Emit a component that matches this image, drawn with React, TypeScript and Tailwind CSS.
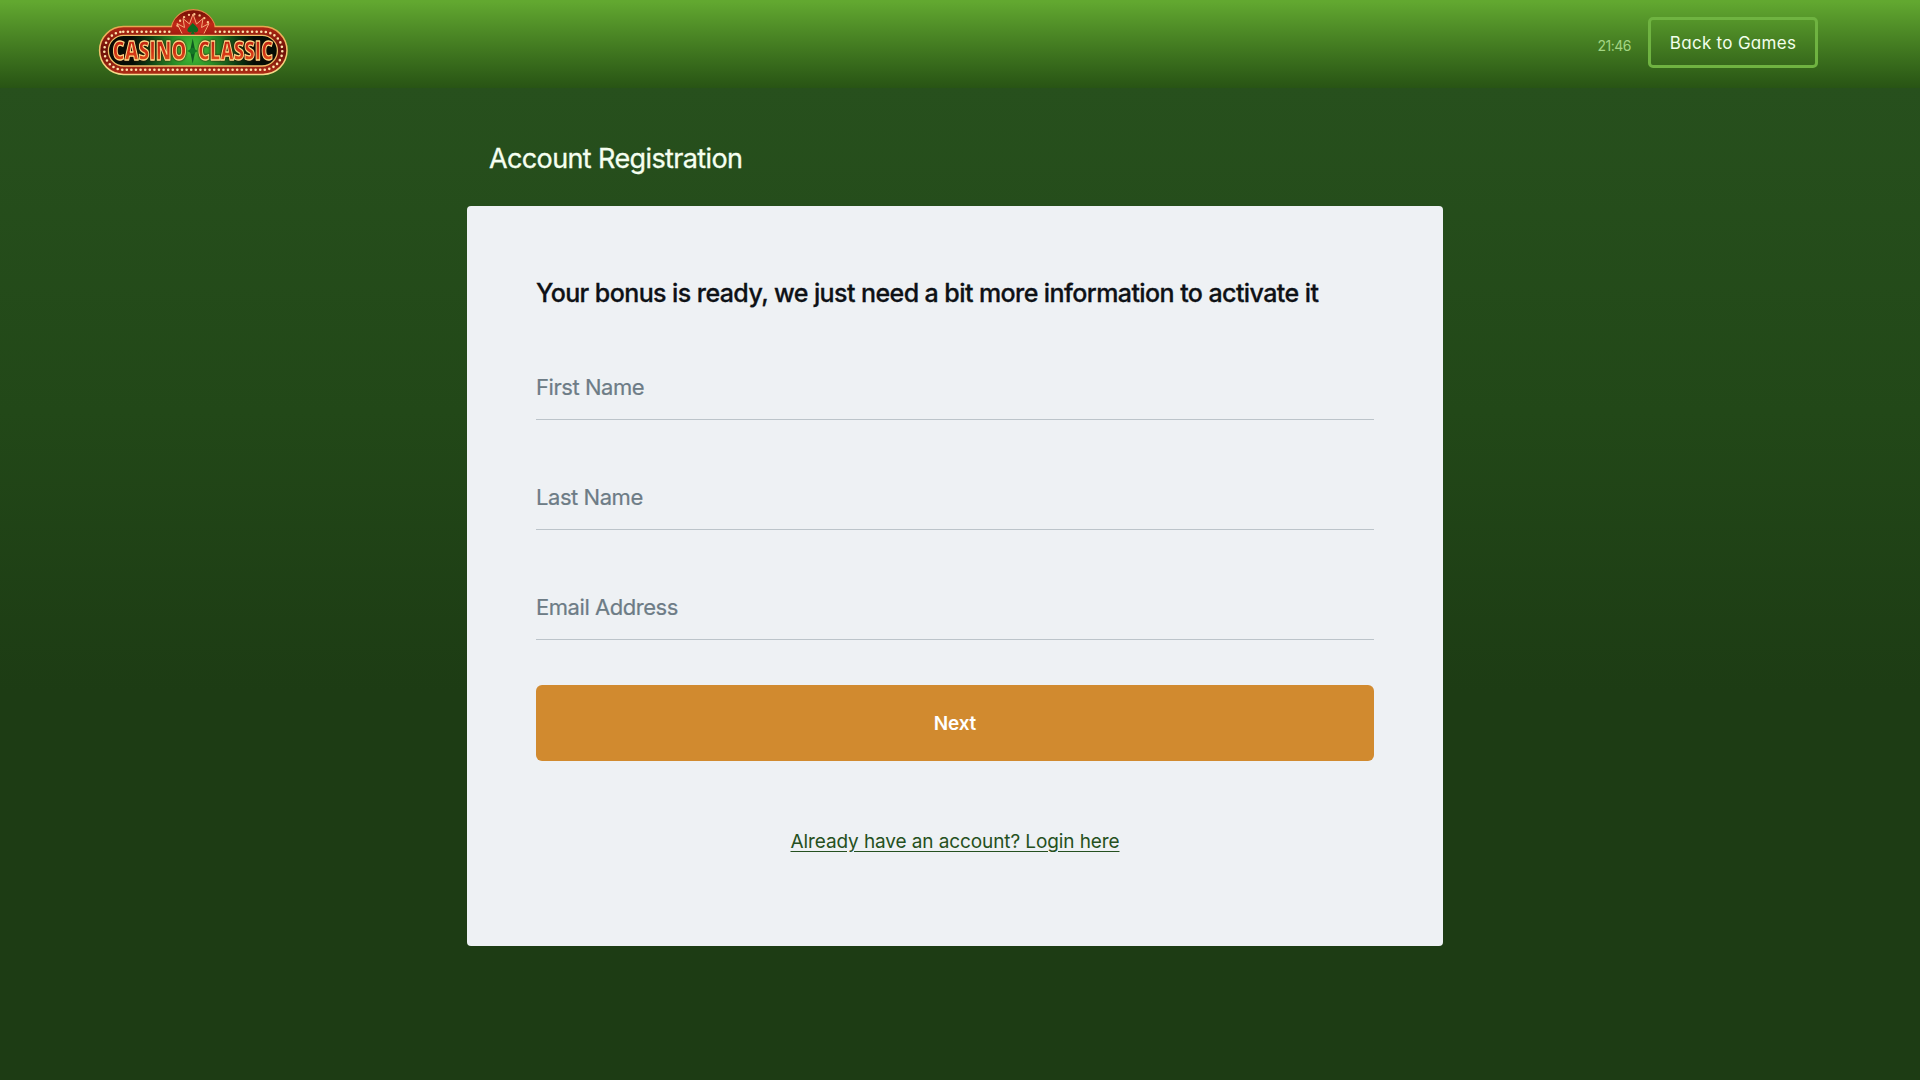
import React from "react";

const fields = ["First Name", "Last Name", "Email Address"];

function Logo() {
  return (
    <svg className="mt-2 h-[68px] w-[190px] shrink-0 overflow-visible" viewBox="98 8 190 68" role="img" aria-label="Casino Classic">
      <defs>
        <linearGradient id="band" x1="0" y1="0" x2="0" y2="1">
          <stop offset="0" stopColor="#b02814" />
          <stop offset="0.5" stopColor="#6a1008" />
          <stop offset="1" stopColor="#b02c16" />
        </linearGradient>
        <linearGradient id="dome" x1="0" y1="0" x2="0" y2="1">
          <stop offset="0" stopColor="#7c1207" />
          <stop offset="0.5" stopColor="#c22817" />
          <stop offset="1" stopColor="#a01a10" />
        </linearGradient>
        <radialGradient id="felt" gradientUnits="userSpaceOnUse" cx="193" cy="50" r="62">
          <stop offset="0" stopColor="#4cc43c" />
          <stop offset="0.3" stopColor="#2f9a2a" />
          <stop offset="0.75" stopColor="#0c3a12" />
          <stop offset="1" stopColor="#050d06" />
        </radialGradient>
        <linearGradient id="gold" x1="0" y1="0" x2="0" y2="1">
          <stop offset="0" stopColor="#e8a850" />
          <stop offset="0.5" stopColor="#f2c26a" />
          <stop offset="1" stopColor="#f7dc8c" />
        </linearGradient>
        <linearGradient id="letters" x1="0" y1="0" x2="0" y2="1">
          <stop offset="0" stopColor="#b81c10" />
          <stop offset="0.55" stopColor="#cf3014" />
          <stop offset="1" stopColor="#ee6a22" />
        </linearGradient>
      </defs>
      <circle cx="193.3" cy="32.2" r="22.6" fill="url(#dome)" stroke="#e08a48" strokeWidth="1.3" />
      <rect x="99.6" y="26.6" width="187.4" height="47.8" rx="23.9" fill="url(#band)" stroke="url(#gold)" strokeWidth="1.5" />
      <rect x="104.3" y="31.8" width="178" height="38" rx="19" fill="none" stroke="#ffe3ac" strokeWidth="2.6" strokeLinecap="round" strokeDasharray="0 4.6" />
      <path d="M172 35 V27 Q174 17 183 13 h21 Q213 18 214.5 27 V35z" fill="url(#dome)" />
      <path d="M177.5 25.5 a17 17 0 0 1 32 0" fill="none" stroke="#ffc890" strokeWidth="2.4" strokeLinecap="round" strokeDasharray="0 5.4" />
      <path d="M182 33.5 L177 23.5 L184.5 27.5 L183 18.5 L189.5 24 L193 14 L196.5 24 L203 18.5 L201.5 27.5 L209 23.5 L204 33.5" fill="#c4281b" stroke="#f5a878" strokeWidth="1" />
      <path d="M192.7 23 C196 26.5 199 28 198 31 Q196 33.5 193.5 31.5 L195 34.5 H190.5 L192 31.5 Q189.5 33.5 187.5 31 C187 28 190 26.5 192.7 23z" fill="#0d6a20" />
      <rect x="108.4" y="35.4" width="169" height="30.6" rx="15.3" fill="url(#felt)" stroke="#f0bd68" strokeWidth="1.3" />
      <path d="M192.7 38.5 L195.3 51 L192.7 63.5 L190.1 51z" fill="#0f5c22" />
      <path d="M187.5 51 L192.7 47.5 L197.5 51 L192.7 54.5z" fill="#137a25" />
      <g
        className="drop-shadow-[0_0_1px_#3a0804]"
        fontFamily="'Open Sans', Inter, sans-serif"
        fontWeight="800"
        fontSize="27"
        strokeLinejoin="round"
        fill="url(#letters)"
        stroke="#ffdc88"
        strokeWidth="1.3"
      >
        <text x="112.5" y="60.3" textLength="74" lengthAdjust="spacingAndGlyphs">CASINO</text>
        <text x="198" y="60.3" textLength="75" lengthAdjust="spacingAndGlyphs">CLASSIC</text>
      </g>
    </svg>
  );
}

function Header() {
  return (
    <header className="flex h-[88px] items-start justify-between bg-linear-to-b from-[#62a830] from-2% to-[#285414] pr-[102px] pl-[98px]">
      <Logo />
      <div className="flex items-start [font-feature-settings:'cv11']">
        <span className="mt-[36px] mr-[17px] text-[14px] leading-[20px] tracking-[-0.5px] text-[#a3d583]">21:46</span>
        <button className="mt-[17px] flex h-[51px] w-[170px] items-center justify-center rounded-[5px] border-[3px] border-[#6fb341] pt-[2px] text-[17px] tracking-[0.3px] text-[#f2ffeb]">
          Back to Games
        </button>
      </div>
    </header>
  );
}

export default function App() {
  return (
    <div className="h-[1080px] w-[1920px] overflow-hidden bg-linear-to-b from-[#27501d] from-8% via-[#224818] via-38% to-[#1d3c14] to-64% font-['Inter',sans-serif]">
      <Header />
      <main className="ml-[467px] w-[976px]">
        <h1 className="flex h-[118px] items-center pt-[24px] pl-[22px] text-[27px] leading-[36px] tracking-[-0.62px] text-[#f5fff0] [-webkit-text-stroke:0.3px_#f5fff0]">
          Account Registration
        </h1>
        <form className="h-[740px] rounded-[4px] bg-[#eef1f4] px-[69px] pt-[69px]">
          <h2 className="h-[75px] text-[25px] leading-[36px] font-medium tracking-[-0.58px] whitespace-nowrap text-[#0e1116] [-webkit-text-stroke:0.3px_#0e1116]">
            Your bonus is ready, we just need a bit more information to activate it
          </h2>
          {fields.map((name, i) => (
            <label
              key={name}
              className={`block border-b border-[#bcc4ca] text-[22px] leading-[30px] tracking-[-0.45px] text-[#6d7c86] [-webkit-text-stroke:0.2px_#6d7c86] ${
                i === 0 ? "h-[70px] pt-[22px]" : "h-[110px] pt-[62px]"
              }`}
            >
              {name}
            </label>
          ))}
          <button
            type="button"
            className="mt-[45px] flex h-[76px] w-full items-center justify-center rounded-[6px] bg-[#d18a2f] pt-[2px] text-[19px] font-semibold tracking-[-0.2px] text-white"
          >
            Next
          </button>
          <div className="mt-[67px] text-center">
            <a className="text-[19px] leading-[28px] tracking-[-0.1px] text-[#255020] underline underline-offset-[3px]">
              Already have an account? Login here
            </a>
          </div>
        </form>
      </main>
    </div>
  );
}
